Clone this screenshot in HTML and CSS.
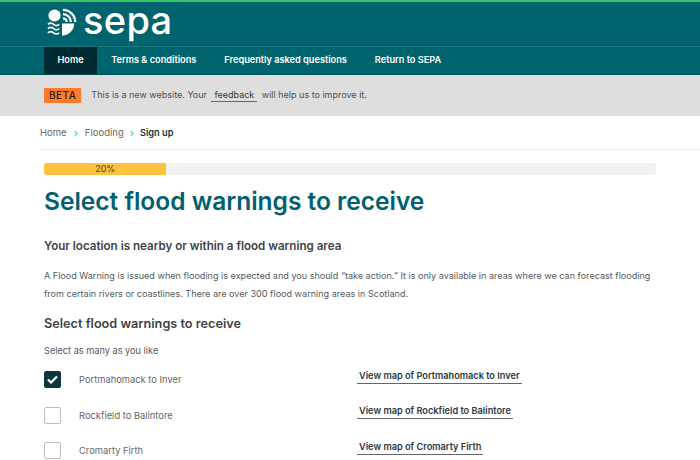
FILE: index.html
```html
<!DOCTYPE html>
<html lang="en">
<head>
  <meta charset="UTF-8" />
  <title>SEPA - Select flood warnings</title>
  <link rel="stylesheet" href="styles.css">
</head>
<body>
  <header class="site-header">
    <div class="brand">
      <svg class="brand-icon" width="30" height="29" viewBox="0 0 32 30">
        <circle cx="8" cy="7.5" r="6.5" fill="#fff"/>
        <path d="M17 1.5a13 13 0 0 1 13 13" fill="none" stroke="#fff" stroke-width="2.4"/>
        <path d="M17 6a8.500 8.500 0 0 1 8.500 8.500" fill="none" stroke="#fff" stroke-width="2.400"/>
        <path d="M17 10.500a4 4 0 0 1 4 4" fill="none" stroke="#fff" stroke-width="2.400"/>
        <path d="M16 16h13a13 13 0 0 1-13 13z" fill="#fff"/>
        <path d="M1 17q3-2.500 6 0t6 0M1 21.500q3-2.500 6 0t6 0M1 26q3-2.500 6 0t6 0" fill="none" stroke="#fff" stroke-width="1.800"/>
      </svg>
      <span class="brand-name">sepa</span>
    </div>
    <nav class="main-nav">
      <a class="nav-link active" href="#">Home</a>
      <a class="nav-link" href="#">Terms &amp; conditions</a>
      <a class="nav-link" href="#">Frequently asked questions</a>
      <a class="nav-link" href="#">Return to SEPA</a>
    </nav>
  </header>

  <div class="beta-bar">
    <span class="beta-tag">BETA</span>
    <span>This is a new website. Your <a class="feedback" href="#">feedback</a> will help us to improve it.</span>
  </div>

  <div class="breadcrumbs">
    <a href="#">Home</a><span class="crumb-sep">&rsaquo;</span>
    <a href="#">Flooding</a><span class="crumb-sep last">&rsaquo;</span>
    <strong>Sign up</strong>
  </div>

  <main class="container">
    <div class="progress">
      <div class="progress-fill" style="width: 20%">20%</div>
    </div>
    <h1>Select flood warnings to receive</h1>
    <h2>Your location is nearby or within a flood warning area</h2>
    <p class="intro">A Flood Warning is issued when flooding is expected and you should “take action.” It is only available in areas where we can forecast flooding from certain rivers or coastlines. There are over 300 flood warning areas in Scotland.</p>
    <h3>Select flood warnings to receive</h3>
    <p class="hint">Select as many as you like</p>

    <div class="warning-row">
      <span class="checkbox checked">
        <svg width="11" height="9" viewBox="0 0 11 9"><path d="M1 4.500l3 3 6-6" fill="none" stroke="#fff" stroke-width="2.200"/></svg>
      </span>
      <span class="warning-name">Portmahomack to Inver</span>
      <a class="map-link" href="#">View map of Portmahomack to Inver</a>
    </div>
    <div class="warning-row">
      <span class="checkbox"></span>
      <span class="warning-name">Rockfield to Balintore</span>
      <a class="map-link" href="#">View map of Rockfield to Balintore</a>
    </div>
    <div class="warning-row">
      <span class="checkbox"></span>
      <span class="warning-name">Cromarty Firth</span>
      <a class="map-link" href="#">View map of Cromarty Firth</a>
    </div>
  </main>
</body>
</html>
```

FILE: styles.css
```css
body {
  margin: 0;
  height: 460px;
  overflow: hidden;
  font-family: Inter, 'Liberation Sans', sans-serif;
  background: white;
  color: #55595c;
}

a {
  color: inherit;
  text-decoration: none;
}

.site-header {
  background: #00646f;
  border-top: 2px solid #3cc165;
}

.brand {
  display: flex;
  align-items: center;
  gap: 6px;
  height: 44px;
  padding-left: 47px;
  border-bottom: 1px solid #1c7680;
}

.brand-icon {
  margin-top: -3px;
}

.brand-name {
  color: white;
  font-size: 38px;
  font-weight: 500;
  line-height: 30px;
  letter-spacing: 0.3px;
  margin-top: -9px;
}

.main-nav {
  display: flex;
  height: 27px;
  padding-left: 44px;
  border-bottom: 1px solid #00535c;
}

.nav-link {
  padding: 0 14px;
  line-height: 26px;
  color: white;
  font-size: 9.2px;
  font-weight: 600;
}

.nav-link.active {
  background: #002b33;
  padding: 0 13.5px;
}

.beta-bar {
  display: flex;
  align-items: center;
  gap: 10px;
  height: 41px;
  padding-left: 44px;
  background: #dedede;
  font-size: 9px;
  color: #4d5154;
}

.beta-tag {
  background: #ff7a2b;
  color: #1c1c1c;
  font-size: 10px;
  font-weight: 500;
  letter-spacing: 0.5px;
  padding: 1px 5px;
  line-height: 13px;
}

.feedback {
  display: inline-block;
  margin: 0 2px;
  padding: 0 3px 1px;
  color: #33383b;
  border-bottom: 1.5px solid #666;
}

.breadcrumbs {
  display: flex;
  align-items: center;
  height: 33px;
  margin-left: 40px;
  font-size: 9.5px;
  color: #666;
  border-bottom: 1px solid #eeeeee;
}

.breadcrumbs strong {
  color: #12353c;
  font-weight: 600;
  font-size: 9.2px;
}

.crumb-sep {
  margin: 0 7px;
  color: #3cc165;
  font-size: 11px;
}

.crumb-sep.last {
  margin: 0 6px;
}

.container {
  padding: 13px 44px 0;
}

.progress {
  height: 12px;
  background: #f2f2f2;
  border-radius: 3px;
  overflow: hidden;
}

.progress-fill {
  height: 12px;
  background: #ffc23e;
  color: #4a4030;
  font-size: 9px;
  line-height: 12px;
  text-align: center;
}

h1 {
  margin: 12px 0 0;
  color: #00606c;
  font-size: 24.5px;
  font-weight: 600;
  line-height: 28px;
}

h2 {
  margin: 23px 0 0;
  color: #3f4346;
  font-size: 11.6px;
  font-weight: 600;
  line-height: 16px;
}

.intro {
  margin: 13px 0 0;
  font-size: 9.07px;
  line-height: 18px;
}

h3 {
  margin: 13px 0 0;
  color: #3f4346;
  font-size: 12.7px;
  font-weight: 600;
  line-height: 16px;
}

.hint {
  margin: 13px 0 0;
  font-size: 9.2px;
  line-height: 12px;
}

.warning-row {
  display: grid;
  grid-template-columns: 35px 278px auto;
  align-items: center;
  height: 35.5px;
  font-size: 9.35px;
}

.hint + .warning-row {
  margin-top: 5px;
}

.checkbox {
  display: flex;
  align-items: center;
  justify-content: center;
  width: 15px;
  height: 15px;
  border: 1px solid #bdbdbd;
  border-radius: 2px;
}

.checkbox.checked {
  background: #0c3640;
  border-color: #0c3640;
}

.warning-name {
  color: #666;
}

.map-link {
  justify-self: start;
  margin-top: -6px;
  padding: 0 2px 2px;
  color: #2b3a40;
  font-size: 9.2px;
  font-weight: 600;
  border-bottom: 1.5px solid #666;
}
```
